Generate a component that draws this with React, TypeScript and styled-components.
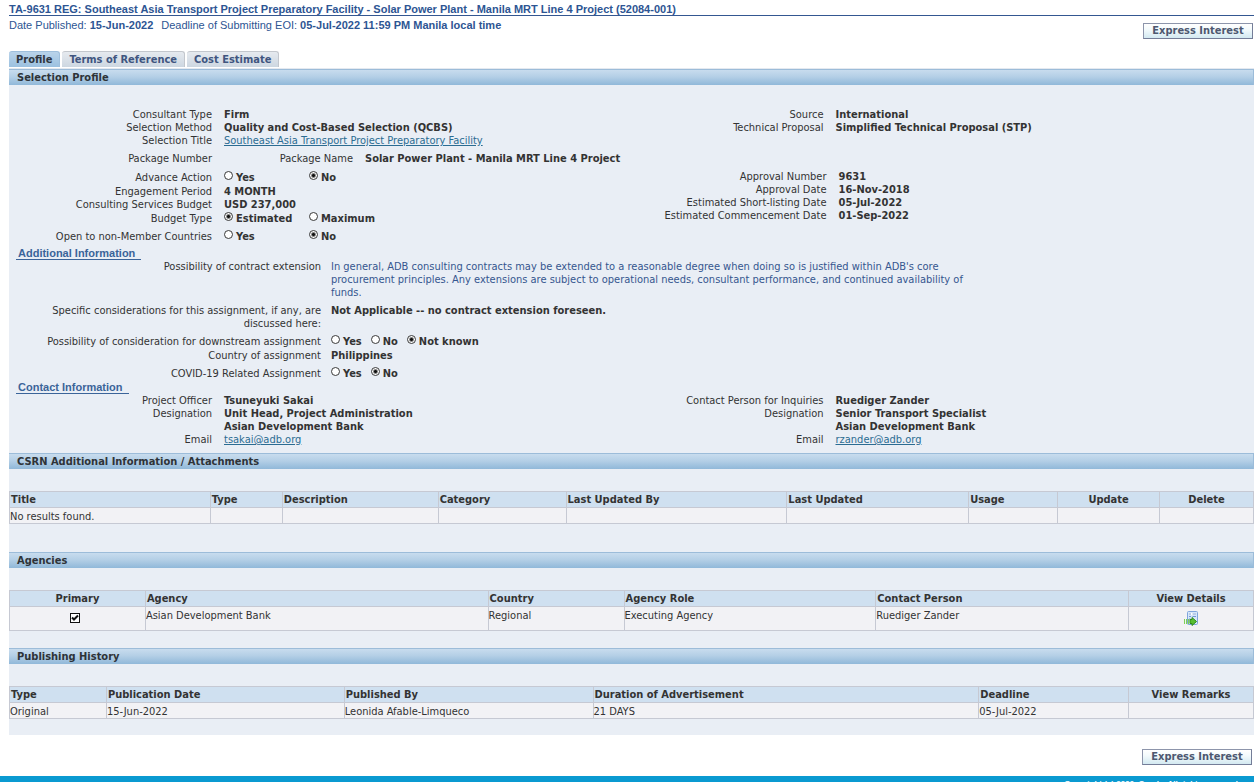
import React from "react";
import styled, { createGlobalStyle } from "styled-components";

const ui = `"DejaVu Sans Condensed", "DejaVu Sans", Tahoma, sans-serif`;
const arial = `"Liberation Sans", Arial, sans-serif`;

const GlobalStyle = createGlobalStyle`
  html { scrollbar-width: none; }
  body {
    margin: 0;
    background: #fff;
    color: #333;
    font: 11px/13px ${ui};
  }
  *, *::before, *::after { box-sizing: border-box; }
`;

const Main = styled.main`
  padding-left: 9px;
`;

const PageTitle = styled.h1`
  margin: 0;
  padding-top: 3px;
  border-bottom: 1px solid #345791;
  color: #2d5593;
  font: bold 11px/12px ${arial};
`;

const MetaRow = styled.div`
  display: flex;
  justify-content: space-between;
  align-items: flex-start;
  height: 35px;
  padding: 3px 1px 0 0;
`;

const Meta = styled.p`
  display: flex;
  gap: 8px;
  margin: 0;
  color: #2d5593;
  font: 11px/12px ${arial};
`;

const ActionButton = styled.button`
  height: 16px;
  min-width: 110px;
  padding: 0 6px;
  border: 1px solid #8d95ab;
  border-right-color: #747d98;
  border-bottom-color: #747d98;
  background: linear-gradient(#fff, #f3fafc 40%, #d3e9f1);
  color: #4d5870;
  font: bold 11px/14px ${ui};
  cursor: pointer;
`;

const TopAction = styled(ActionButton)`
  margin-top: 4px;
`;

const BottomActions = styled.div`
  display: flex;
  justify-content: flex-end;
  padding: 14px 2px 11px 0;
`;

const Tabs = styled.div`
  display: flex;
  gap: 2px;
  padding-bottom: 1px;
  border-bottom: 1px solid #e4e9f0;
`;

const Tab = styled.button<{ $active?: boolean }>`
  height: 16px;
  padding: 0 7px;
  border: solid ${(p) => (p.$active ? "#9fbfdc" : "#c3c7cd")};
  border-width: 1px 1px 0 0;
  border-radius: 3px 3px 0 0;
  background: ${(p) =>
    p.$active ? "linear-gradient(#b9d3ea, #9cc1e0)" : "linear-gradient(#e6eaef, #cdd7e1)"};
  color: ${(p) => (p.$active ? "#2f3640" : "#40557f")};
  font: bold 11px/16px ${ui};
  cursor: pointer;
`;

const Panel = styled.div`
  padding-bottom: 16px;
  background: #e9eef5;
`;

const Bar = styled.h2`
  height: 16px;
  margin: 0;
  padding-left: 8px;
  border: solid #9cbcd9;
  border-width: 1px 1px 0 0;
  background: linear-gradient(#c8dcee, #b4cfe6 45%, #90b8d9);
  color: #2e3338;
  font: bold 11px/16px ${ui};
`;

const Profile = styled.section`
  padding: 23px 0 7px;
`;

const Columns = styled.div`
  display: grid;
  grid-template-columns: 1fr 1fr;
`;

const Stack = styled.div`
  min-width: 0;
`;

const FieldRow = styled.div<{ $label: number; $above?: number }>`
  display: grid;
  grid-template-columns: ${(p) => p.$label}px 1fr;
  column-gap: ${(p) => (p.$label > 300 ? 10 : 12)}px;
  margin-top: ${(p) => p.$above ?? 0}px;
`;

const PackageRow = styled.div`
  display: grid;
  grid-template-columns: 203px 129px 1fr;
  column-gap: 12px;
  padding: 5px 0;
`;

const Label = styled.div<{ $drop?: boolean }>`
  padding-top: ${(p) => (p.$drop ? 1 : 0)}px;
  text-align: right;
`;

const Value = styled.div`
  font-weight: bold;
`;

const Note = styled.div`
  max-width: 650px;
  color: #35568f;
`;

const Link = styled.a`
  color: #2b6c92;
  font-weight: normal;
  text-decoration: underline;
`;

const Options = styled.div<{ $wide?: boolean }>`
  display: grid;
  grid-auto-flow: column;
  grid-auto-columns: ${(p) => (p.$wide ? "76px" : "max-content")};
  column-gap: 9px;
  height: 15px;
`;

const Option = styled.label`
  display: flex;
  gap: 3px;
  padding-top: 1px;
  line-height: 14px;
  font-weight: bold;
  white-space: nowrap;
`;

const Radio = styled.input`
  appearance: none;
  flex: none;
  width: 9px;
  height: 9px;
  margin: 0;
  border: 1px solid #3a3a3a;
  border-radius: 50%;
  background: #fff;
  &:checked {
    background: radial-gradient(circle, #111 0, #111 1px, #fff 3px);
  }
`;

const SubHeading = styled.h3<{ $above?: number }>`
  width: max-content;
  margin: ${(p) => p.$above ?? 0}px 0 0 7px;
  padding: 0 6px 0 2px;
  border-bottom: 1px solid #3b6499;
  color: #3b6499;
  font: bold 11px/12px ${arial};
`;

const TableWrap = styled.div<{ $below: number }>`
  padding: 22px 0 ${(p) => p.$below}px;
`;

const Table = styled.table`
  width: 100%;
  table-layout: fixed;
  border-collapse: collapse;
`;

const Th = styled.th<{ $w: number; $center?: boolean }>`
  width: ${(p) => p.$w / 12.45}%;
  height: 16px;
  padding: 1px 1px 0;
  border: 1px solid #c6c9d3;
  background: #cfe0f0;
  line-height: 14px;
  text-align: ${(p) => (p.$center ? "center" : "left")};
`;

const Td = styled.td<{ $tall?: boolean; $center?: boolean }>`
  height: ${(p) => (p.$tall ? 24 : 16)}px;
  padding: 2px 0 0;
  border: 1px solid #c6c9d3;
  background: #f2f2f5;
  line-height: 13px;
  text-align: ${(p) => (p.$center ? "center" : "left")};
  vertical-align: top;
`;

const CheckBoxWrap = styled.span`
  position: relative;
  display: inline-block;
  padding: 4px 4px 0 0;
  vertical-align: top;
  svg {
    position: absolute;
    left: 0;
    top: 4px;
    pointer-events: none;
  }
`;

const Check = styled.input`
  appearance: none;
  display: block;
  width: 10px;
  height: 10px;
  margin: 0;
  border: 1px solid #111;
  background: #fff;
`;

const IconButton = styled.button`
  display: inline-flex;
  margin-top: 2px;
  padding: 0;
  border: 0;
  background: none;
  vertical-align: top;
  cursor: pointer;
`;

const Footer = styled.footer`
  padding: 3px 14px 6px;
  background: #0a9ad1;
  color: #fff;
  font: bold 8px/10px ${arial};
  text-align: right;
`;

const DetailsIcon = () => (
  <svg width="16" height="16" viewBox="0 0 16 16" aria-hidden="true">
    <rect x="4.5" y="0.5" width="10" height="13" rx="1" fill="#d6e6fa" stroke="#7fa5dc" />
    <rect x="6" y="2" width="7" height="2" fill="#fff" />
    <path d="M6 3h2M9.500 3h3.500M6 5.500h2M9.500 5.500h3.500M6 8h1.500" stroke="#7398d2" />
    <path d="M1.500 8v5M3.500 8v5M5.500 8v5" stroke="#7ed256" />
    <path d="M7 8.500h2v-2l4.500 4-4.500 4v-2H7z" fill="#58bf2f" stroke="#2c8a1b" />
  </svg>
);

type Choice = { name: string; options: string[]; selected: string; wide?: boolean };

const Choices = ({ name, options, selected, wide }: Choice) => (
  <Options $wide={wide} role="radiogroup" aria-label={name}>
    {options.map((o) => (
      <Option key={o}>
        <Radio type="radio" name={name} defaultChecked={o === selected} />
        {o}
      </Option>
    ))}
  </Options>
);

type FieldProps = {
  label: string;
  width?: number;
  above?: number;
  drop?: boolean;
  children?: React.ReactNode;
};

const Field = ({ label, width = 203, above, drop, children }: FieldProps) => (
  <FieldRow $label={width} $above={above}>
    <Label $drop={drop}>{label}</Label>
    <Value>{children}</Value>
  </FieldRow>
);

type ChoiceFieldProps = Omit<Choice, "name"> & { label: string; width?: number; above?: number };

const ChoiceField = ({ label, width, above, ...choice }: ChoiceFieldProps) => (
  <Field label={label} width={width} above={above} drop>
    <Choices name={label} {...choice} />
  </Field>
);

type Column = [title: string, width: number, center?: boolean];

const attachmentColumns: Column[] = [
  ["Title", 201], ["Type", 72], ["Description", 156], ["Category", 128], ["Last Updated By", 221],
  ["Last Updated", 182], ["Usage", 89], ["Update", 102, true], ["Delete", 94, true],
];
const agencyColumns: Column[] = [
  ["Primary", 136, true], ["Agency", 343], ["Country", 136], ["Agency Role", 252],
  ["Contact Person", 253], ["View Details", 125, true],
];
const historyColumns: Column[] = [
  ["Type", 97], ["Publication Date", 238], ["Published By", 249],
  ["Duration of Advertisement", 386], ["Deadline", 150], ["View Remarks", 125, true],
];

const Head = ({ columns }: { columns: Column[] }) => (
  <thead>
    <tr>
      {columns.map(([title, width, center]) => (
        <Th key={title} $w={width} $center={center} scope="col">{title}</Th>
      ))}
    </tr>
  </thead>
);

export default function App() {
  return (
    <>
      <GlobalStyle />
      <Main>
        <PageTitle>
          TA-9631 REG: Southeast Asia Transport Project Preparatory Facility - Solar Power Plant - Manila MRT Line 4 Project (52084-001)
        </PageTitle>
        <MetaRow>
          <Meta>
            <span>Date Published: <b>15-Jun-2022</b></span>
            <span>Deadline of Submitting EOI: <b>05-Jul-2022 11:59 PM Manila local time</b></span>
          </Meta>
          <TopAction type="button">Express Interest</TopAction>
        </MetaRow>
        <Tabs role="tablist">
          <Tab type="button" role="tab" aria-selected $active>Profile</Tab>
          <Tab type="button" role="tab" aria-selected={false}>Terms of Reference</Tab>
          <Tab type="button" role="tab" aria-selected={false}>Cost Estimate</Tab>
        </Tabs>

        <Panel>
          <Bar>Selection Profile</Bar>
          <Profile>
            <Columns>
              <Stack>
                <Field label="Consultant Type">Firm</Field>
                <Field label="Selection Method">Quality and Cost-Based Selection (QCBS)</Field>
                <Field label="Selection Title">
                  <Link href="#title">Southeast Asia Transport Project Preparatory Facility</Link>
                </Field>
                <PackageRow>
                  <Label>Package Number</Label>
                  <Label>Package Name</Label>
                  <Value>Solar Power Plant - Manila MRT Line 4 Project</Value>
                </PackageRow>
              </Stack>
              <Stack>
                <Field label="Source" width={192}>International</Field>
                <Field label="Technical Proposal" width={192}>Simplified Technical Proposal (STP)</Field>
              </Stack>
              <Stack>
                <ChoiceField label="Advance Action" options={["Yes", "No"]} selected="No" wide />
                <Field label="Engagement Period">4 MONTH</Field>
                <Field label="Consulting Services Budget">USD 237,000</Field>
                <ChoiceField label="Budget Type" options={["Estimated", "Maximum"]} selected="Estimated" wide />
                <ChoiceField label="Open to non-Member Countries" options={["Yes", "No"]} selected="No" wide above={3} />
              </Stack>
              <Stack>
                <Field label="Approval Number" width={195}>9631</Field>
                <Field label="Approval Date" width={195}>16-Nov-2018</Field>
                <Field label="Estimated Short-listing Date" width={195}>05-Jul-2022</Field>
                <Field label="Estimated Commencement Date" width={195}>01-Sep-2022</Field>
              </Stack>
            </Columns>

            <SubHeading $above={3}>Additional Information</SubHeading>
            <FieldRow $label={312}>
              <Label>Possibility of contract extension</Label>
              <Note>
                In general, ADB consulting contracts may be extended to a reasonable degree when doing so is justified within ADB's core procurement principles. Any extensions are subject to operational needs, consultant performance, and continued availability of funds.
              </Note>
            </FieldRow>
            <Field label="Specific considerations for this assignment, if any, are discussed here:" width={312} above={5}>
              Not Applicable -- no contract extension foreseen.
            </Field>
            <ChoiceField
              label="Possibility of consideration for downstream assignment"
              options={["Yes", "No", "Not known"]}
              selected="Not known"
              width={312}
              above={4}
            />
            <Field label="Country of assignment" width={312}>Philippines</Field>
            <ChoiceField label="COVID-19 Related Assignment" options={["Yes", "No"]} selected="No" width={312} above={4} />

            <SubHeading>Contact Information</SubHeading>
            <Columns>
              <Stack>
                <Field label="Project Officer">Tsuneyuki Sakai</Field>
                <Field label="Designation">Unit Head, Project Administration<br />Asian Development Bank</Field>
                <Field label="Email"><Link href="mailto:tsakai@adb.org">tsakai@adb.org</Link></Field>
              </Stack>
              <Stack>
                <Field label="Contact Person for Inquiries" width={192}>Ruediger Zander</Field>
                <Field label="Designation" width={192}>Senior Transport Specialist<br />Asian Development Bank</Field>
                <Field label="Email" width={192}><Link href="mailto:rzander@adb.org">rzander@adb.org</Link></Field>
              </Stack>
            </Columns>
          </Profile>

          <Bar>CSRN Additional Information / Attachments</Bar>
          <TableWrap $below={28}>
            <Table>
              <Head columns={attachmentColumns} />
              <tbody>
                <tr>
                  <Td>No results found.</Td>
                  {attachmentColumns.slice(1).map(([title]) => <Td key={title} />)}
                </tr>
              </tbody>
            </Table>
          </TableWrap>

          <Bar>Agencies</Bar>
          <TableWrap $below={17}>
            <Table>
              <Head columns={agencyColumns} />
              <tbody>
                <tr>
                  <Td $tall $center>
                    <CheckBoxWrap>
                      <Check type="checkbox" defaultChecked aria-label="Primary agency" />
                      <svg width="10" height="10" viewBox="0 0 10 10" aria-hidden="true">
                        <path d="M2 4.500l2 2 4-4" fill="none" stroke="#111" strokeWidth="2" />
                      </svg>
                    </CheckBoxWrap>
                  </Td>
                  <Td $tall>Asian Development Bank</Td>
                  <Td $tall>Regional</Td>
                  <Td $tall>Executing Agency</Td>
                  <Td $tall>Ruediger Zander</Td>
                  <Td $tall $center>
                    <IconButton type="button" aria-label="View Details"><DetailsIcon /></IconButton>
                  </Td>
                </tr>
              </tbody>
            </Table>
          </TableWrap>

          <Bar>Publishing History</Bar>
          <TableWrap $below={0}>
            <Table>
              <Head columns={historyColumns} />
              <tbody>
                <tr>
                  <Td>Original</Td>
                  <Td>15-Jun-2022</Td>
                  <Td>Leonida Afable-Limqueco</Td>
                  <Td>21 DAYS</Td>
                  <Td>05-Jul-2022</Td>
                  <Td />
                </tr>
              </tbody>
            </Table>
          </TableWrap>
        </Panel>
        <BottomActions>
          <ActionButton type="button">Express Interest</ActionButton>
        </BottomActions>
      </Main>
      <Footer>Copyright (c) 2006, Oracle. All rights reserved.</Footer>
    </>
  );
}
